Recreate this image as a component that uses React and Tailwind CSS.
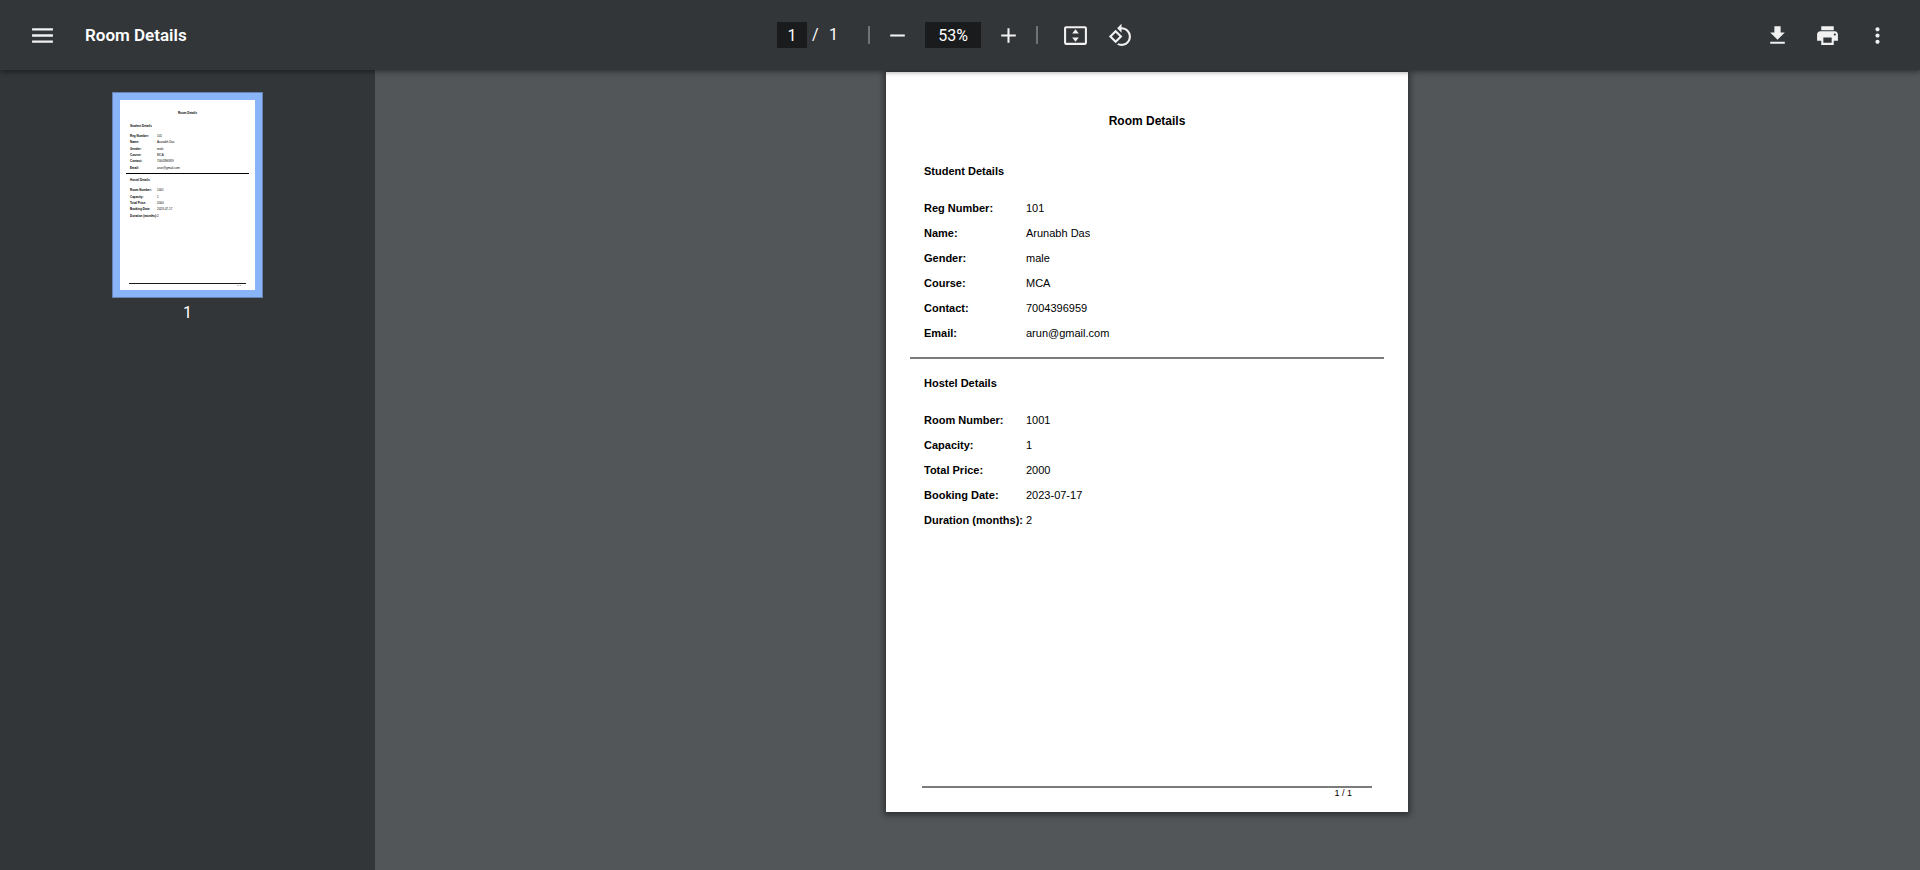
import React from "react";

const studentRows = [
  ["Reg Number:", "101"],
  ["Name:", "Arunabh Das"],
  ["Gender:", "male"],
  ["Course:", "MCA"],
  ["Contact:", "7004396959"],
  ["Email:", "arun@gmail.com"],
];

const hostelRows = [
  ["Room Number:", "1001"],
  ["Capacity:", "1"],
  ["Total Price:", "2000"],
  ["Booking Date:", "2023-07-17"],
  ["Duration (months):", "2"],
];

const pageStyles = {
  sheet: "h-[740px] w-[522px] pt-[39px] pb-[14px] shadow-[0_1px_6px_2px_rgba(0,0,0,0.45)]",
  title: "text-[12px] leading-[20px] mb-[28px]",
  heading: "text-[11px] leading-[25px] ml-[38px] mb-[12px]",
  table: "text-[11px] leading-[25px] ml-[38px]",
  label: "w-[102px]",
  studentTable: "h-[150px]",
  hostelTable: "h-[125px]",
  rule: "mx-[24px] mt-[11px] mb-[12px] h-[2px] bg-[#7b7b7b]",
  footRule: "mx-[36px] h-[2px] bg-[#7b7b7b]",
  foot: "mr-[56px] text-[9px] leading-[10px]",
};

const thumbStyles = {
  sheet: "h-[190px] w-[135px] pt-[10px] pb-[3px]",
  title: "text-[3px] leading-[6px] mb-[7px]",
  heading: "text-[3px] leading-[6px] ml-[10px] mb-[4px]",
  table: "text-[3px] leading-[6px] ml-[10px]",
  label: "w-[27px]",
  studentTable: "h-[38px]",
  hostelTable: "h-[32px]",
  rule: "mx-[6px] mt-[2px] mb-[3px] h-[1px] bg-black",
  footRule: "mx-[9px] h-[1px] bg-[#1a1a1a]",
  foot: "mr-[14px] text-[2px] leading-[3px]",
};

function DetailTable({ rows, s, height }) {
  return (
    <table className={`border-collapse ${s.table} ${height}`}>
      <tbody>
        {rows.map(([label, value]) => (
          <tr key={label}>
            <th scope="row" className={`p-0 text-left font-bold whitespace-nowrap ${s.label}`}>
              {label}
            </th>
            <td className="p-0 whitespace-nowrap">{value}</td>
          </tr>
        ))}
      </tbody>
    </table>
  );
}

function Sheet({ s }) {
  return (
    <article
      className={`flex flex-col bg-white text-black font-['Liberation_Sans',Arial,sans-serif] ${s.sheet}`}
    >
      <h2 className={`text-center font-bold ${s.title}`}>Room Details</h2>
      <h3 className={`font-bold ${s.heading}`}>Student Details</h3>
      <DetailTable rows={studentRows} s={s} height={s.studentTable} />
      <div className={`shrink-0 ${s.rule}`} />
      <h3 className={`font-bold ${s.heading}`}>Hostel Details</h3>
      <DetailTable rows={hostelRows} s={s} height={s.hostelTable} />
      <footer className="mt-auto">
        <div className={s.footRule} />
        <p className={`text-right ${s.foot}`}>1 / 1</p>
      </footer>
    </article>
  );
}

function IconButton({ label, children }) {
  return (
    <button
      type="button"
      aria-label={label}
      className="flex h-[40px] w-[41px] shrink-0 items-center justify-center rounded-full hover:bg-white/10"
    >
      <svg viewBox="0 0 24 24" className="h-[25px] w-[25px] fill-[#f1f1f1]">
        {children}
      </svg>
    </button>
  );
}

function Separator() {
  return <span className="h-[18px] w-[2px] shrink-0 bg-[#707274]" />;
}

export default function App() {
  return (
    <div className="flex min-h-screen flex-col bg-[#525659] font-[Roboto,sans-serif] text-[16px] text-white">
      <header className="relative z-10 flex h-[70px] items-center bg-[#323639] shadow-[0_2px_5px_rgba(0,0,0,0.4)]">
        <div className="flex flex-1 items-center gap-[22px] pl-[22px]">
          <IconButton label="Menu">
            <path d="M2 5h20v2.2H2zM2 10.9h20v2.2H2zM2 16.8h20v2.2H2z" />
          </IconButton>
          <h1 className="text-[17px] leading-[20px] font-semibold">Room Details</h1>
        </div>

        <div className="flex w-[366px] items-center">
          <input
            aria-label="Page number"
            defaultValue="1"
            className="h-[26px] w-[30px] bg-[#191b1c] text-center outline-none"
          />
          <span className="ml-[5px] w-[8px]">/</span>
          <span className="ml-[9px] w-[39px]">1</span>
          <Separator />
          <div className="ml-[7px] mr-[7px] flex items-center gap-[7px]">
            <IconButton label="Zoom out">
              <path d="M5 11h14v2H5z" />
            </IconButton>
            <input
              aria-label="Zoom level"
              defaultValue="53%"
              className="h-[26px] w-[56px] bg-[#191b1c] text-center outline-none"
            />
            <IconButton label="Zoom in">
              <path d="M19 13h-6v6h-2v-6H5v-2h6V5h2v6h6z" />
            </IconButton>
          </div>
          <Separator />
          <div className="ml-[17px] flex items-center gap-[4px]">
            <IconButton label="Fit to page">
              <path
                fillRule="evenodd"
                d="M3 3h18c1.1 0 2 .9 2 2v14c0 1.1-.9 2-2 2H3c-1.1 0-2-.9-2-2V5c0-1.1.9-2 2-2zm0 2v14h18V5H3zm9 .9l3.2 4.1H8.8zm0 12.2L8.8 14h6.4z"
              />
            </IconButton>
            <IconButton label="Rotate counterclockwise">
              <path d="M7.34 6.41L.86 12.9l6.49 6.48 6.49-6.48-6.5-6.49zM3.69 12.9l3.66-3.66L11 12.9l-3.66 3.66-3.65-3.66zm15.67-6.26C17.61 4.88 15.3 4 13 4V.76L8.76 5 13 9.24V6c1.79 0 3.58.68 4.95 2.05 2.73 2.73 2.73 7.17 0 9.9C16.58 19.32 14.79 20 13 20c-.97 0-1.94-.21-2.84-.61l-1.49 1.49C10.02 21.62 11.51 22 13 22c2.3 0 4.61-.88 6.36-2.64 3.52-3.51 3.52-9.21 0-12.72z" />
            </IconButton>
          </div>
        </div>

        <div className="flex flex-1 items-center justify-end gap-[9px] pr-[22px]">
          <IconButton label="Download">
            <path d="M19 9h-4V3H9v6H5l7 7 7-7zM5 18v2h14v-2H5z" />
          </IconButton>
          <IconButton label="Print">
            <path d="M19 8H5c-1.66 0-3 1.34-3 3v6h4v4h12v-4h4v-6c0-1.66-1.34-3-3-3zm-3 11H8v-5h8v5zm3-7c-.55 0-1-.45-1-1s.45-1 1-1 1 .45 1 1-.45 1-1 1zm-1-9H6v4h12V3z" />
          </IconButton>
          <IconButton label="More actions">
            <path d="M12 8c1.1 0 2-.9 2-2s-.9-2-2-2-2 .9-2 2 .9 2 2 2zm0 2c-1.1 0-2 .9-2 2s.9 2 2 2 2-.9 2-2-.9-2-2-2zm0 6c-1.1 0-2 .9-2 2s.9 2 2 2 2-.9 2-2-.9-2-2-2z" />
          </IconButton>
        </div>
      </header>

      <div className="flex flex-1">
        <aside className="flex w-[375px] shrink-0 flex-col items-center bg-[#323639] pt-[22px]">
          <a href="#page-1" aria-label="Page 1" className="border border-[#6582b2] bg-[#8ab4f8] p-[7px]">
            <Sheet s={thumbStyles} />
          </a>
          <span className="mt-[5px] leading-[20px]">1</span>
        </aside>
        <main id="page-1" className="flex flex-1 items-start justify-center pt-[2px] pr-[1px]">
          <Sheet s={pageStyles} />
        </main>
      </div>
    </div>
  );
}
